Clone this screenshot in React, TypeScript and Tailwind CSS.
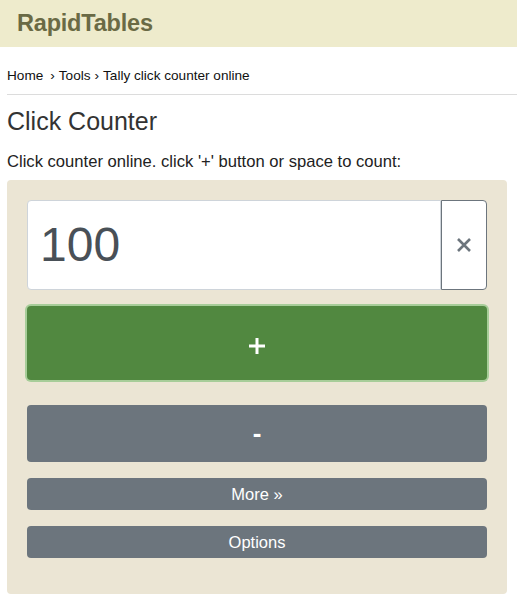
import { useState } from 'react'

const grayButton =
  'w-full rounded-[4px] bg-[#6c757d] text-white flex items-center justify-center'

export default function App() {
  const [count, setCount] = useState(100)

  return (
    <div className="min-h-[601px] bg-white text-[#212529] font-['Liberation_Sans',Arial,sans-serif]">
      <header className="h-[47px] bg-[#eeebcc] flex items-center px-[17px]">
        <span className="text-[23.5px] font-bold text-[#6a6a45] tracking-[-0.2px]">RapidTables</span>
      </header>

      <div className="pl-[7px]">
        <nav className="h-[48px] flex items-end pb-[8px] text-[13.6px] text-[#111] border-b border-[#dcdcdc]">
          <span>Home</span>
          <span className="ml-[7px] mr-[4px]">›</span>
          <span>Tools</span>
          <span className="mx-[4px]">›</span>
          <span>Tally click counter online</span>
        </nav>

        <h1 className="mt-[11px] text-[25px] leading-[30px] text-[#333]">Click Counter</h1>

        <p className="mt-[15px] text-[16.6px] leading-[22px] text-[#222]">
          Click counter online. click '+' button or space to count:
        </p>
      </div>

      <div className="mx-[7px] mt-[7px] w-[500px] rounded-[4px] bg-[#ebe5d4] px-[20px] pt-[20px] pb-[36px]">
        <div className="flex h-[90px]">
          <div className="flex-1 bg-white border border-[#ced4da] rounded-l-[4px] flex items-center pl-[12px] text-[48px] text-[#495057]">
            {count}
          </div>
          <button
            type="button"
            onClick={() => setCount(0)}
            className="w-[46px] border border-[#6c757d] rounded-r-[4px] bg-white flex items-center justify-center text-[#6c757d]"
          >
            <svg width="16" height="16" viewBox="0 0 16 16">
              <path d="M2 2L14 14M14 2L2 14" stroke="currentColor" strokeWidth="2.6" />
            </svg>
          </button>
        </div>

        <button
          type="button"
          onClick={() => setCount((c) => c + 1)}
          className="mt-[16px] w-full h-[74px] rounded-[4px] bg-[#518840] text-white flex items-center justify-center pt-[6px] ring-[2px] ring-[#a7cd99]"
        >
          <svg width="18" height="18" viewBox="0 0 18 18">
            <path d="M9 1V17M1 9H17" stroke="currentColor" strokeWidth="3" />
          </svg>
        </button>

        <button
          type="button"
          onClick={() => setCount((c) => c - 1)}
          className={`${grayButton} mt-[25px] h-[57px] text-[26px] font-bold`}
        >
          -
        </button>

        <button type="button" className={`${grayButton} mt-[16px] h-[32px] text-[16.5px]`}>
          More »
        </button>

        <button type="button" className={`${grayButton} mt-[16px] h-[32px] text-[16.5px]`}>
          Options
        </button>
      </div>
    </div>
  )
}
